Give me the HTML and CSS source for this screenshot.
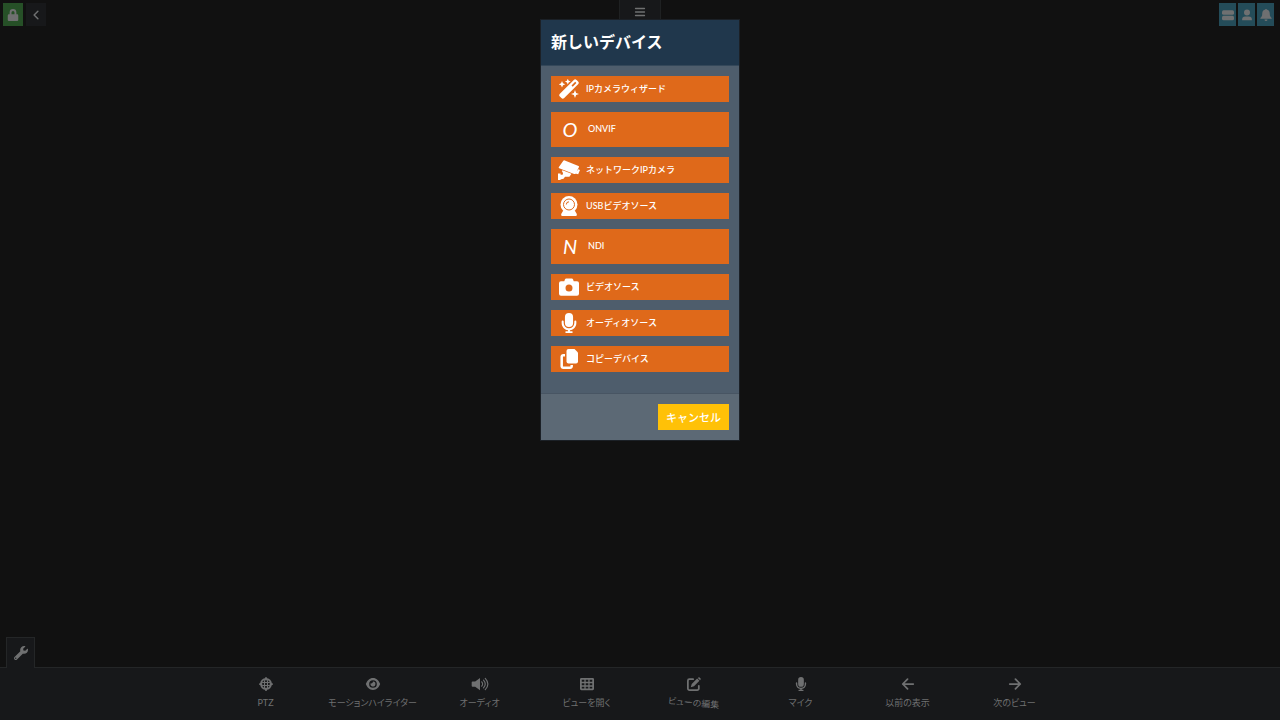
FILE: index.html
```html
<!DOCTYPE html>
<html lang="ja">
<head>
  <meta charset="UTF-8">
  <meta name="viewport" content="width=device-width, initial-scale=1.0">
  <title>新しいデバイス</title>
  <link rel="stylesheet" href="styles.css">
</head>
<body>
  <svg class="sprite" aria-hidden="true">
    <symbol id="i-mic" viewBox="0 0 384 512"><path d="M192 0a104 104 0 0 0-104 104v152a104 104 0 0 0 208 0V104A104 104 0 0 0 192 0zM56 216a26 26 0 0 0-52 0v40c0 97 72 174 162 186v22h-46a24 24 0 0 0 0 48h144a24 24 0 0 0 0-48h-46v-22c90-12 162-89 162-186v-40a26 26 0 0 0-52 0v40a136 136 0 0 1-272 0z"/></symbol>
  </svg>

  <header class="topbar">
    <div class="top-group">
      <button type="button" class="top-btn lock" aria-label="ロック">
        <svg viewBox="0 0 14 16"><path d="M2.500 7V4.500a4.500 4.500 0 0 1 9 0V7h.7A1.500 1.500 0 0 1 14 8.500v6a1.500 1.500 0 0 1-1.500 1.500h-11A1.500 1.500 0 0 1 0 14.500v-6A1.500 1.500 0 0 1 1.500 7zM5 7h4V4.500a2 2 0 0 0-4 0z"/></svg>
      </button>
      <button type="button" class="top-btn back" aria-label="戻る">
        <svg viewBox="0 0 14 16"><path class="line" d="M9.500 3 4.500 8l5 5"/></svg>
      </button>
    </div>
    <button type="button" class="menu-tab" aria-label="メニュー">
      <svg viewBox="0 0 12 12"><path class="thin" d="M1.500 2.500h9M1.500 6h9M1.500 9.500h9"/></svg>
    </button>
    <div class="top-group right">
      <button type="button" class="top-btn info" aria-label="サーバー">
        <svg viewBox="0 0 16 16"><rect x="0" y="1.500" width="16" height="6" rx="2"/><rect x="0" y="9" width="16" height="6" rx="2"/></svg>
      </button>
      <button type="button" class="top-btn info" aria-label="アカウント">
        <svg viewBox="0 0 16 16"><circle cx="8" cy="4.500" r="4"/><path d="M1.500 15v-1a4 4 0 0 1 4-4h5a4 4 0 0 1 4 4v1z"/></svg>
      </button>
      <button type="button" class="top-btn info" aria-label="通知">
        <svg viewBox="0 0 16 16"><path d="M7.200 0a.8.8 0 0 1 1.600 0v.8C11.500 1.200 13 3.500 13 6c0 3.500 1 4.500 2.500 6v1H.5v-1C2 10.500 3 9.500 3 6c0-2.500 1.500-4.800 4.200-5.200zM6 14h4a2 2 0 0 1-4 0z"/></svg>
      </button>
    </div>
  </header>

  <main class="stage">
    <button type="button" class="tool-tab" aria-label="設定">
      <svg viewBox="0 0 512 512"><path d="M507.730 109.100c-2.240-9.030-13.540-12.090-20.120-5.510l-74.360 74.360-67.880-11.310-11.310-67.880 74.360-74.360c6.620-6.620 3.430-17.900-5.660-20.160-47.380-11.740-99.550.91-136.580 37.930-39.640 39.640-50.550 97.100-34.050 147.200L18.740 402.760c-24.990 24.990-24.990 65.510 0 90.500 24.990 24.990 65.510 24.990 90.500 0l213.210-213.210c50.120 16.710 107.470 5.680 147.370-34.220 37.070-37.070 49.700-89.320 37.910-136.730zM64 472c-13.250 0-24-10.750-24-24 0-13.260 10.750-24 24-24s24 10.740 24 24c0 13.250-10.750 24-24 24z"/></svg>
    </button>
  </main>

  <nav class="toolbar">
    <button type="button" class="tool">
      <svg viewBox="0 0 16 16"><circle class="line" cx="8" cy="8" r="5.800"/><path class="line" d="M8 1v2M8 13v2M1 8h2M13 8h2"/><path class="thin" d="M6.300 4v8M9.700 4v8M4 6.300h8M4 9.700h8"/></svg>
      <span>PTZ</span>
    </button>
    <button type="button" class="tool">
      <svg class="wide" viewBox="0 0 18 16"><path fill-rule="evenodd" d="M.8 8C2.500 4 5 1.200 9 1.200S15.500 4 17.200 8C15.500 12 13 14.800 9 14.800S2.500 12 .8 8zM9 3.600a4.400 4.400 0 1 0 0 8.800 4.400 4.400 0 0 0 0-8.800z"/><path d="M9 5.200a2.800 2.800 0 1 1-2.700 2A2 2 0 0 0 9 5.200z"/></svg>
      <span>モーションハイライター</span>
    </button>
    <button type="button" class="tool">
      <svg class="wide" viewBox="0 0 20 16"><path d="M1.500 5h3L10 1v14L4.500 11h-3Q.5 11 .5 10V6q0-1 1-1z"/><path class="thin" d="M12 5.500q2 2.500 0 5M14 3.500q4 4.500 0 9M16 1.500q6 6.500 0 13"/></svg>
      <span>オーディオ</span>
    </button>
    <button type="button" class="tool">
      <svg viewBox="0 0 16 16"><path fill-rule="evenodd" d="M1.500 1h13A1.500 1.500 0 0 1 16 2.500v11a1.500 1.500 0 0 1-1.500 1.500h-13A1.500 1.500 0 0 1 0 13.500v-11A1.500 1.500 0 0 1 1.500 1zM2 3v2.500h3V3zm4.500 0v2.500h3V3zM11 3v2.500h3V3zM2 7v2.500h3V7zm4.500 0v2.500h3V7zM11 7v2.500h3V7zM2 11v2h3v-2zm4.500 0v2h3v-2zm4.500 0v2h3v-2z"/></svg>
      <span>ビューを開く</span>
    </button>
    <button type="button" class="tool wobble">
      <svg viewBox="0 0 16 16"><path class="line" d="M7 2.500H2.800A1.800 1.800 0 0 0 1 4.300v8.900A1.800 1.800 0 0 0 2.800 15h8.900a1.800 1.800 0 0 0 1.800-1.800V10"/><path d="M11.600 1.800 14.200 4.400 8 10.600l-3.700 1.100 1.100-3.700zM12.400 1a1.800 1.800 0 0 1 2.600 0 1.800 1.800 0 0 1 0 2.600z"/></svg>
      <span>ビューの編集</span>
    </button>
    <button type="button" class="tool">
      <svg><use href="#i-mic"/></svg>
      <span>マイク</span>
    </button>
    <button type="button" class="tool">
      <svg viewBox="0 0 16 16"><path class="line" d="M14 8H2M7.500 2.500 2 8l5.500 5.500"/></svg>
      <span>以前の表示</span>
    </button>
    <button type="button" class="tool">
      <svg viewBox="0 0 16 16"><path class="line" d="M2 8h12M8.500 2.500 14 8l-5.500 5.500"/></svg>
      <span>次のビュー</span>
    </button>
  </nav>

  <div class="overlay">
    <div class="modal" role="dialog" aria-labelledby="modalTitle">
      <div class="modal-header">
        <h1 id="modalTitle">新しいデバイス</h1>
      </div>
      <div class="modal-body">
        <button type="button" class="device">
          <svg viewBox="0 0 20 20"><path fill-rule="evenodd" d="M14.800.9a2 2 0 0 1 2.800 0l1.500 1.500a2 2 0 0 1 0 2.800L5.200 19.100a2 2 0 0 1-2.800 0L.9 17.600a2 2 0 0 1 0-2.800zm1.400 1.900-3.700 3.700 1.200 1.200 3.700-3.700z"/><path d="m3 2 1 2.300L6.300 5.300 4 6.300 3 8.600 2 6.300-.3 5.300 2 4.300zM8.800-.3l.9 2 2 .9-2 .9-.9 2-.9-2-2-.9 2-.9zM16 11l1.100 2.900 2.900 1.100-2.900 1.100L16 19l-1.100-2.900L12 15l2.900-1.100z"/></svg>
          <span>IPカメラウィザード</span>
        </button>
        <button type="button" class="device tall">
          <i class="letter">O</i>
          <span>ONVIF</span>
        </button>
        <button type="button" class="device">
          <svg class="cctv" viewBox="0 0 22 20"><path d="M5.300.8Q5.800 0 6.800.4L20.500 6q.9.4.4 1.300l-3.300 6.200q-.5.900-1.500.5L1.200 8.200Q.2 7.700.9 6.900zM20.300 9.200l1.700.7-1.800 4.400-3-.9zM4.500 10.200l9 3.500-1.700 2.500q-.4.600-1.200.6H7Q6 19.300 3.200 19.300H2.600v.7H0v-6.500h2.600v1.200h1.500q1 0 .9-1.200-.1-1.500-1.200-2.500z"/></svg>
          <span>ネットワークIPカメラ</span>
        </button>
        <button type="button" class="device">
          <svg viewBox="0 0 20 20"><circle cx="10" cy="8.500" r="8.500"/><path d="M4 15h12l1.800 3v1a1 1 0 0 1-1 1H3.200a1 1 0 0 1-1-1v-1z"/><circle class="lens" cx="10" cy="8.500" r="5.500"/><path class="lens" d="M7.300 8.500A2.700 2.700 0 0 1 10 5.800"/></svg>
          <span>USBビデオソース</span>
        </button>
        <button type="button" class="device tall">
          <i class="letter">N</i>
          <span>NDI</span>
        </button>
        <button type="button" class="device">
          <svg viewBox="0 0 20 20"><path fill-rule="evenodd" d="M7.300 1.500h5.400a1.500 1.500 0 0 1 1.400 1l.6 1.800H18a2 2 0 0 1 2 2v10.400a2 2 0 0 1-2 2H2a2 2 0 0 1-2-2V6.300a2 2 0 0 1 2-2h3.300l.6-1.800a1.500 1.500 0 0 1 1.400-1zM10 7.500a3.500 3.500 0 1 0 0 7 3.500 3.500 0 0 0 0-7z"/></svg>
          <span>ビデオソース</span>
        </button>
        <button type="button" class="device">
          <svg><use href="#i-mic"/></svg>
          <span>オーディオソース</span>
        </button>
        <button type="button" class="device">
          <svg viewBox="0 0 20 20"><path d="M9.500 0h6L19 3.500v9a2 2 0 0 1-2 2H9.500a2 2 0 0 1-2-2V2a2 2 0 0 1 2-2z"/><path class="sheet" d="M6 6.300H4.200A1.500 1.500 0 0 0 2.700 7.800v9.400a1.500 1.500 0 0 0 1.500 1.500h7a1.500 1.500 0 0 0 1.500-1.500V16"/></svg>
          <span>コピーデバイス</span>
        </button>
      </div>
      <div class="modal-footer">
        <button type="button" class="cancel">キャンセル</button>
      </div>
    </div>
  </div>
</body>
</html>
```
FILE: styles.css
```css
* {
  box-sizing: border-box;
}

body {
  margin: 0;
  min-height: 100vh;
  display: flex;
  flex-direction: column;
  background: #111111;
  color: #6f7071;
  font-family: Lato, 'Noto Sans CJK JP', sans-serif;
}

button {
  margin: 0;
  padding: 0;
  border: none;
  font-family: inherit;
  color: inherit;
  cursor: pointer;
}

svg {
  display: block;
  fill: currentColor;
}

.sprite {
  position: absolute;
  width: 0;
  height: 0;
}

.line,
.thin {
  fill: none;
  stroke: currentColor;
  stroke-width: 2;
  stroke-linecap: round;
  stroke-linejoin: round;
}

.thin {
  stroke-width: 1.3;
}

.topbar {
  display: grid;
  grid-template-columns: 1fr auto 1fr;
  align-items: start;
}

.top-group {
  display: flex;
  gap: 3px;
  padding: 3px;
}

.top-group.right {
  justify-content: flex-end;
  gap: 2px;
  padding-right: 6px;
}

.top-btn {
  display: flex;
  align-items: center;
  justify-content: center;
  width: 20px;
  height: 23px;
}

.top-btn svg {
  width: 12px;
  height: 12px;
}

.lock {
  background: #265027;
}

.back {
  background: #17181a;
}

.info {
  width: 17px;
  background: #244c59;
}

.menu-tab {
  display: flex;
  justify-content: center;
  width: 42px;
  height: 24px;
  padding-top: 6px;
  background: #17181a;
  border: 1px solid #1f2122;
  border-top: none;
}

.menu-tab svg {
  width: 12px;
  height: 12px;
}

.stage {
  flex: 1;
  display: flex;
  align-items: flex-end;
  padding-left: 6px;
}

.tool-tab {
  display: flex;
  align-items: center;
  justify-content: center;
  width: 29px;
  height: 31px;
  margin-bottom: -1px;
  background: #17181a;
  border: 1px solid #242627;
  border-bottom: none;
  z-index: 1;
}

.tool-tab svg {
  width: 14px;
  height: 14px;
}

.toolbar {
  display: flex;
  justify-content: center;
  height: 53px;
  background: #17181a;
  border-top: 1px solid #242627;
}

.tool {
  display: flex;
  flex-direction: column;
  align-items: center;
  gap: 4px;
  width: 107px;
  padding-top: 9px;
  background: none;
  font-size: 9px;
  font-feature-settings: 'palt';
  line-height: 16px;
  white-space: nowrap;
}

.tool svg {
  width: 14px;
  height: 14px;
}

.tool svg.wide {
  width: 18px;
}

.wobble span {
  transform: rotate(5deg);
}

.overlay {
  position: fixed;
  inset: 0;
  display: flex;
  justify-content: center;
  align-items: flex-start;
  padding-top: 19px;
}

.modal {
  width: 200px;
  border: 1px solid #1b2026;
  background: #4e5d6c;
  color: #ffffff;
}

.modal-header {
  padding: 9px 10px 11px;
  background: #20374c;
  border-bottom: 1px solid #34485a;
}

.modal-header h1 {
  margin: 0;
  font-size: 16px;
  font-weight: 700;
  line-height: 25px;
}

.modal-body {
  display: flex;
  flex-direction: column;
  gap: 10px;
  padding: 10px 10px 21px;
}

.device {
  display: flex;
  align-items: center;
  gap: 7px;
  height: 26px;
  padding: 0 8px;
  background: #df691a;
  font-size: 9px;
  font-weight: 500;
  line-height: 16px;
  white-space: nowrap;
}

.device.tall {
  height: 35px;
  padding-bottom: 2px;
}

.device svg {
  width: 20px;
  height: 20px;
}

.device .cctv {
  width: 22px;
  margin: 0 -1px;
}

.letter {
  width: 22px;
  font-size: 20px;
  font-weight: 400;
  line-height: 24px;
  text-align: center;
}

.lens {
  fill: none;
  stroke: #df691a;
  stroke-width: 1;
}

.sheet {
  fill: none;
  stroke: currentColor;
  stroke-width: 2.5;
}

.modal-footer {
  display: flex;
  justify-content: flex-end;
  padding: 10px;
  background: #5c6975;
  border-top: 1px solid #485563;
}

.cancel {
  height: 26px;
  padding: 0 8px;
  background: #ffc107;
  font-size: 11px;
  font-weight: 500;
}
```
